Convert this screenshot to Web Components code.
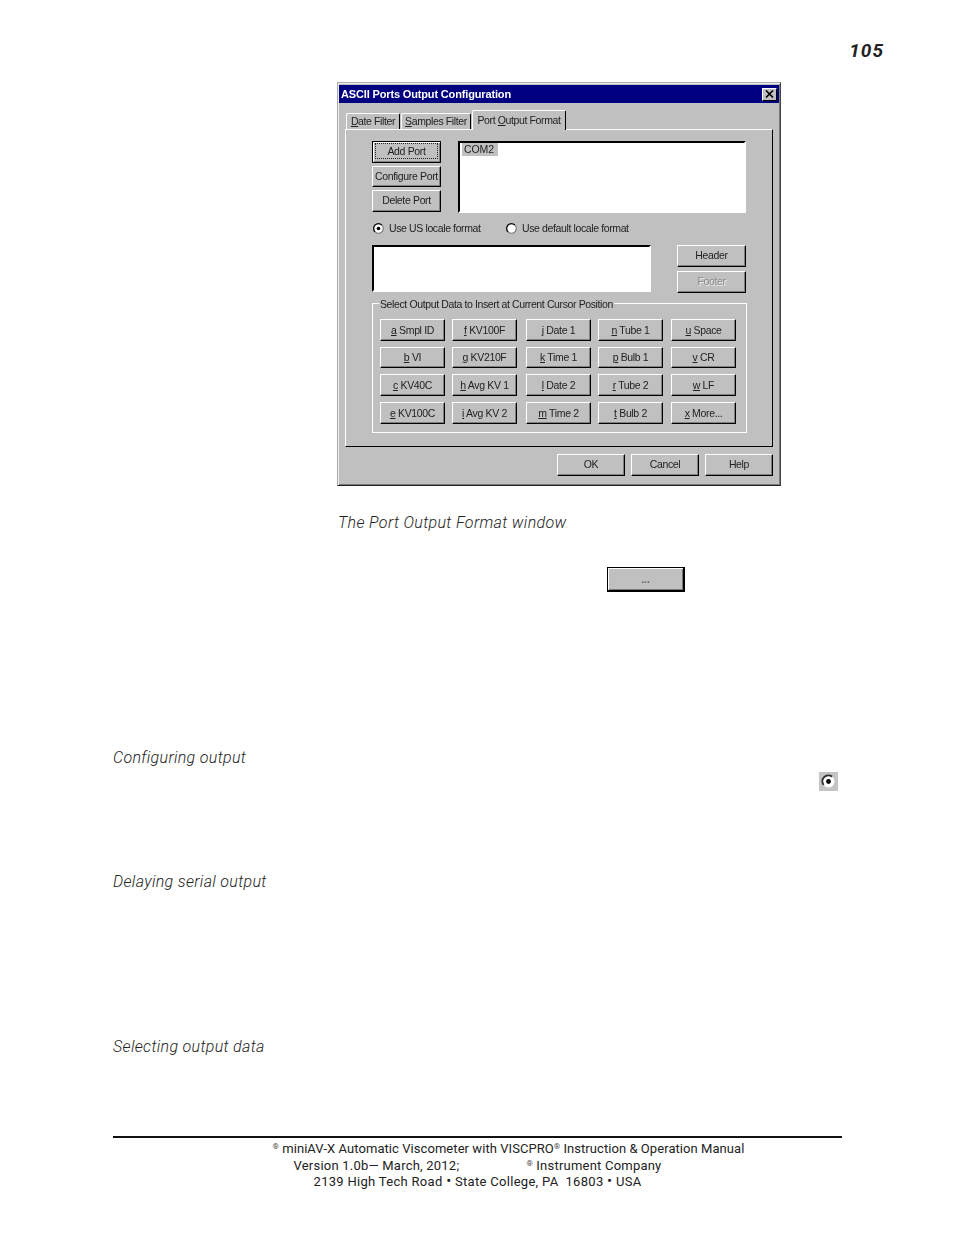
<!DOCTYPE html>
<html><head><meta charset="utf-8"><title>ASCII Ports Output Configuration</title>
<style>
html,body{margin:0;background:#fff}
body{font-family:"Roboto","Liberation Sans",sans-serif;color:#222}
</style></head><body>
<manual-page></manual-page>
<script>
function def(name, css, html){
  const t=document.createElement('template');
  t.innerHTML='<style>'+css+'</style>'+html;
  customElements.define(name, class extends HTMLElement{
    constructor(){super();this.attachShadow({mode:'open'}).appendChild(t.content.cloneNode(true));}
  });
}
def('win-btn',`
:host{display:flex;box-sizing:border-box;height:22px;width:65px;background:#c0c0c0;
 border:1px solid;border-color:#fff #000 #000 #fff;box-shadow:inset -1px -1px 0 #808080;
 font:10.5px/1 "Liberation Sans",sans-serif;color:#222;align-items:center;justify-content:center;white-space:nowrap;letter-spacing:-.35px;padding-bottom:1px}
:host([wide]){width:69px}
:host([long]){width:68px}
:host([cell]){padding-bottom:0}
:host([short]){height:21px}
:host([default]){border-color:#000;box-shadow:inset 1px 1px 0 #fff,inset -1px -1px 0 #808080}
:host([default]) .f{outline:1px dotted #222;align-self:stretch;flex:1;margin:2px 3px 3px 3px;display:flex;align-items:center;justify-content:center}
:host([disabled]){color:#8a8a8a;text-shadow:1px 1px 0 #eee}
`,`<span class="f"><slot></slot></span>`);
def('win-radio',`
:host{display:inline-flex;align-items:center;gap:5px;height:14px;font:10.5px/14px "Liberation Sans",sans-serif;color:#222;letter-spacing:-.38px;white-space:nowrap}
svg{flex:none}
.dot{display:none}
:host([checked]) .dot{display:inline}
`,`<svg width="11" height="11" viewBox="0 0 12 12"><circle cx="6" cy="6" r="5.2" fill="#fff" stroke="#777" stroke-width="1.2"/><path d="M2.2 9.6A5.2 5.2 0 0 1 9.6 2.2" fill="none" stroke="#111" stroke-width="1.3"/><circle class="dot" cx="6" cy="6" r="2" fill="#000"/></svg><slot></slot>`);
def('win-tab',`
:host{display:flex;box-sizing:border-box;height:16px;background:#c0c0c0;border:1px solid;border-bottom:0;border-color:#fff #000 #000 #fff;border-radius:2px 2px 0 0;padding-bottom:1px;
 font:10.5px/1 "Liberation Sans",sans-serif;color:#222;align-items:center;justify-content:center;white-space:nowrap;letter-spacing:-.38px}
:host([active]){height:20px;margin-bottom:-1px;position:relative;z-index:1;padding:1px 0 1px}
`,`<slot></slot>`);
def('ascii-dialog',`
:host{display:block;box-sizing:border-box;width:444px;height:404px;margin-left:337px;background:#c0c0c0;border:1px solid #aaa;border-right-color:#444;border-bottom-color:#222;padding:2px 1px 1px;box-shadow:inset 1px 1px 0 #eee,inset -1px -1px 0 #7a7a7a;filter:blur(.3px)}
.title{height:18px;background:#000080;color:#fff;font:bold 11px/18px "Liberation Sans",sans-serif;display:flex;align-items:center;justify-content:space-between;padding:0 2px 0 2px;letter-spacing:-.15px}
.x{box-sizing:border-box;width:15px;height:13px;background:#c0c0c0;border:1px solid;border-color:#fff #000 #000 #fff;display:flex;align-items:center;justify-content:center}
.tabs{display:flex;align-items:flex-end;height:19px;margin:7px 0 0 7px;gap:1px}
.panel{box-sizing:border-box;width:428px;height:318px;margin-left:6px;border:1px solid;border-color:#fff #000 #000 #fff;padding:11px 0 0 26px}
.r1{display:flex;gap:17px}
.left{display:grid;grid-template-rows:22px 21px 22px;row-gap:3px;width:69px}
.left win-btn{height:100%}
.well{box-sizing:border-box;background:#fff;border:2px solid;border-color:#000 #fff #fff #000}
.list{width:288px;height:72px;font:10.5px/13px "Liberation Sans",sans-serif;color:#222;padding:0 2px;letter-spacing:-.1px}
.sel{display:block;width:34px;background:#c0c0c0;padding-left:2px;height:13px}
.r2{display:flex;margin:8px 0 0 1px}
.r2 win-radio:first-child{width:133px}
.r3{display:flex;gap:26px;margin-top:10px;height:48px}
.box{width:279px;height:47px}
.side{display:flex;flex-direction:column;gap:4px}
.group{box-sizing:border-box;width:375px;height:130px;margin-top:10px;border:1px solid #fff;padding-left:7px}
.group legend-text{display:block;width:fit-content;margin:-7px 0 0 -1px;height:14px;padding:0 1px;background:#c0c0c0;font:10.5px/14px "Liberation Sans",sans-serif;color:#222;letter-spacing:-.38px;white-space:nowrap}
.grid{display:grid;grid-template-columns:72px 74px 72px 73px 65px;grid-template-rows:28px 27px 28px 22px;margin-top:8px}
.foot{display:flex;justify-content:flex-end;gap:6px;margin:7px 6px 0 0}
u{text-underline-offset:1px}
`,`
<div class="title"><span>ASCII Ports Output Configuration</span><span class="x"><svg width="9" height="8" viewBox="0 0 9 8"><path d="M1 0.5L8 7.5M8 0.5L1 7.5" stroke="#000" stroke-width="1.6"/></svg></span></div>
<div class="tabs">
 <win-tab style="width:54px"><span><u>D</u>ate Filter</span></win-tab>
 <win-tab style="width:70px"><span><u>S</u>amples Filter</span></win-tab>
 <win-tab active style="width:94px"><span>Port <u>O</u>utput Format</span></win-tab>
</div>
<div class="panel">
 <div class="r1">
  <div class="left"><win-btn wide default>Add Port</win-btn><win-btn wide>Configure Port</win-btn><win-btn wide>Delete Port</win-btn></div>
  <div class="well list"><span class="sel">COM2</span></div>
 </div>
 <div class="r2"><win-radio checked>Use US locale format</win-radio><win-radio>Use default locale format</win-radio></div>
 <div class="r3"><div class="well box"></div><div class="side"><win-btn wide>Header</win-btn><win-btn wide disabled>Footer</win-btn></div></div>
 <div class="group"><legend-text>Select Output Data to Insert at Current Cursor Position</legend-text>
  <div class="grid">
   <win-btn cell><span><u>a</u> Smpl ID</span></win-btn><win-btn cell><span><u>f</u> KV100F</span></win-btn><win-btn cell><span><u>j</u> Date 1</span></win-btn><win-btn cell><span><u>n</u> Tube 1</span></win-btn><win-btn cell><span><u>u</u> Space</span></win-btn>
   <win-btn cell short><span><u>b</u> VI</span></win-btn><win-btn cell short><span><u>g</u> KV210F</span></win-btn><win-btn cell short><span><u>k</u> Time 1</span></win-btn><win-btn cell short><span><u>p</u> Bulb 1</span></win-btn><win-btn cell short><span><u>v</u> CR</span></win-btn>
   <win-btn cell><span><u>c</u> KV40C</span></win-btn><win-btn cell><span><u>h</u> Avg KV 1</span></win-btn><win-btn cell><span><u>l</u> Date 2</span></win-btn><win-btn cell><span><u>r</u> Tube 2</span></win-btn><win-btn cell><span><u>w</u> LF</span></win-btn>
   <win-btn cell><span><u>e</u> KV100C</span></win-btn><win-btn cell><span><u>i</u> Avg KV 2</span></win-btn><win-btn cell><span><u>m</u> Time 2</span></win-btn><win-btn cell><span><u>t</u> Bulb 2</span></win-btn><win-btn cell><span><u>x</u> More...</span></win-btn>
  </div>
 </div>
</div>
<div class="foot"><win-btn long>OK</win-btn><win-btn long>Cancel</win-btn><win-btn long>Help</win-btn></div>
`);
def('side-label',`
:host{display:block;height:20px;margin-left:113px;font:italic 300 16px/22px "Roboto",sans-serif;color:#222;white-space:nowrap;letter-spacing:.33px}
`,`<slot></slot>`);
def('manual-footer',`
:host{display:block;margin:80px 112px 0 113px;border-top:2px solid #111;padding-top:3px;font:13px/16px "Roboto",sans-serif;color:#222;text-align:center;white-space:nowrap}
div{height:16px}
.a{padding-left:62px;letter-spacing:.06px;height:17px}
.b{letter-spacing:.22px}
.c{letter-spacing:.3px}
sup{font-size:8px;line-height:0;vertical-align:4px;color:#444}
.gap{display:inline-block;width:67px}
.dot{font-size:15px;line-height:0}
`,`<div class="a"><sup>®</sup> miniAV-X Automatic Viscometer with VISCPRO<sup>®</sup> Instruction &amp; Operation Manual</div>
<div class="b">Version 1.0b— March, 2012;<span class="gap"></span><sup>®</sup> Instrument Company</div>
<div class="c">2139 High Tech Road <span class="dot">•</span> State College, PA&nbsp; 16803 <span class="dot">•</span> USA</div>`);
def('ellipsis-btn',`
:host{display:flex;box-sizing:border-box;width:78px;height:25px;margin:35px 0 0 607px;background:#c0c0c0;border:1px solid #000;border-right-width:2px;border-bottom-width:2px;box-shadow:inset 1px 1px 0 #fff,inset -1px -1px 0 #777;
 font:10px/1 "Liberation Sans",sans-serif;color:#666;align-items:flex-end;justify-content:center;padding-bottom:5px;font-weight:bold}
`,`<slot></slot>`);
def('radio-icon',`
:host{display:block;width:19px;height:19px;margin:5px 0 0 819px;background:#c4c4c4}
svg{display:block}
`,`<svg width="19" height="19" viewBox="0 0 19 19"><circle cx="9.5" cy="9.5" r="6" fill="#fff"/><path d="M4.6 13A6 6 0 0 1 13 4.6" fill="none" stroke="#333" stroke-width="2"/><circle cx="9.5" cy="9.5" r="2.4" fill="#000"/></svg>`);
def('manual-page',`
:host{display:block;width:954px;height:1235px;overflow:hidden;font-family:"Roboto",sans-serif}
.num{height:22px;margin:39px 70px 0 0;text-align:right;font:italic bold 19px/24px "Roboto",sans-serif;color:#222;letter-spacing:1px}
ascii-dialog{margin-top:21px}
.cap{height:20px;margin:26px 0 0 338px;font:italic 300 16px/22px "Roboto",sans-serif;color:#222;white-space:nowrap;letter-spacing:.35px}
.s1{margin-top:155px}.s2{margin-top:80px}.s3{margin-top:145px}
`,`
<div class="num">105</div>
<ascii-dialog></ascii-dialog>
<div class="cap">The Port Output Format window</div>
<ellipsis-btn>...</ellipsis-btn>
<side-label class="s1">Configuring output</side-label>
<radio-icon></radio-icon>
<side-label class="s2">Delaying serial output</side-label>
<side-label class="s3">Selecting output data</side-label>
<manual-footer></manual-footer>
`);
</script>
</body></html>
